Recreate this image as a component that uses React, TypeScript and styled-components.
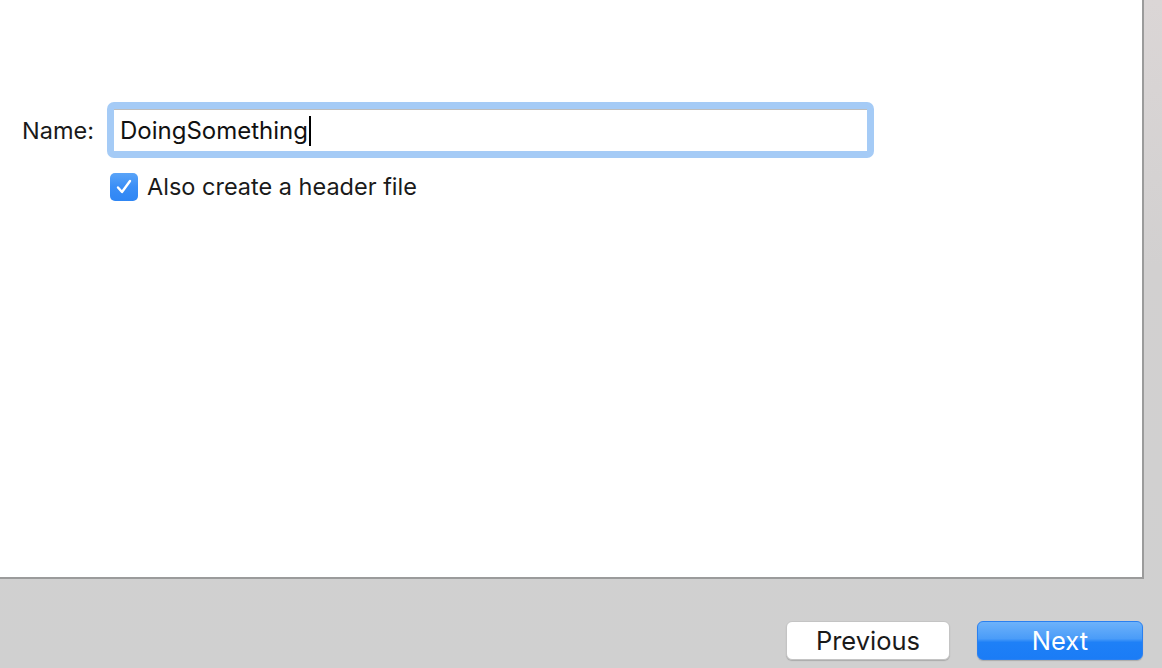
import React from "react";
import styled, { createGlobalStyle } from "styled-components";

const Global = createGlobalStyle`
  html, body { margin: 0; padding: 0; }
  body {
    width: 1162px; height: 668px; overflow: hidden;
    background: linear-gradient(180deg, #dbd6d6 0%, #d2d0d0 40%, #d0d0d0 100%);
    font-family: Inter, "Noto Sans", "Liberation Sans", sans-serif;
    color: #1c1c1c;
  }
`;

const Page = styled.div`
  display: flex;
  flex-direction: column;
  height: 668px;
`;

const Panel = styled.div`
  width: 1144px;
  height: 579px;
  box-sizing: border-box;
  background: #ffffff;
  border-right: 2px solid #9b9b9b;
  border-bottom: 2px solid #9b9b9b;
  padding-top: 102px;
`;

const Form = styled.div`
  display: grid;
  grid-template-columns: 107px 767px;
  row-gap: 14px;
  align-items: center;
`;

const Label = styled.label`
  font-size: 23.5px;
  text-align: right;
  padding-right: 13px;
  color: #1a1a1a;
`;

const Ring = styled.div`
  height: 56px;
  border-radius: 7px;
  background: #a5cbf6;
  padding: 7px;
  box-sizing: border-box;
  display: flex;
`;

const Field = styled.div`
  flex: 1;
  background: #fff;
  border-top: 1px solid #bdbdbd;
  display: flex;
  align-items: center;
  padding-left: 6px;
  font-size: 24px;
  color: #111;
`;

const Caret = styled.span`
  display: inline-block;
  width: 2px;
  height: 30px;
  background: #000;
  margin-left: 1px;
`;

const CheckRow = styled.div`
  grid-column: 2;
  display: flex;
  align-items: center;
  gap: 9px;
  padding-left: 3px;
  font-size: 23.5px;
  color: #1a1a1a;
`;

const Box = styled.span`
  width: 28px;
  height: 28px;
  border-radius: 5px;
  background: linear-gradient(180deg, #5aa4f8 0%, #3a8ef6 50%, #2f86f4 100%);
  display: flex;
  align-items: center;
  justify-content: center;
`;

const Footer = styled.div`
  flex: 1;
  display: flex;
  justify-content: flex-end;
  align-items: flex-start;
  gap: 27px;
  padding: 42px 19px 0 0;
`;

const Button = styled.button<{ $primary?: boolean }>`
  width: ${(p) => (p.$primary ? 166 : 164)}px;
  height: 39px;
  border-radius: 6px;
  font-family: inherit;
  font-size: 25.5px;
  line-height: 1;
  cursor: default;
  border: ${(p) => (p.$primary ? "1px solid #2a80f0" : "1px solid #c4c4c4")};
  color: ${(p) => (p.$primary ? "#ffffff" : "#1a1a1a")};
  background: ${(p) =>
    p.$primary
      ? "linear-gradient(180deg, #6db2fa 0%, #4a9cf8 45%, #1e80f7 55%, #1b7cf6 100%)"
      : "#ffffff"};
  box-shadow: 0 1px 1px rgba(0, 0, 0, 0.18);
  padding: 0;
`;

export default function App() {
  return (
    <>
      <Global />
      <Page>
        <Panel>
          <Form>
            <Label>Name:</Label>
            <Ring>
              <Field>
                DoingSomething
                <Caret />
              </Field>
            </Ring>
            <CheckRow>
              <Box>
                <svg width="20" height="20" viewBox="0 0 20 20">
                  <path d="M4 10.5 L8 15 L16 4" fill="none" stroke="#fff" strokeWidth="2.4" strokeLinecap="round" strokeLinejoin="round" />
                </svg>
              </Box>
              Also create a header file
            </CheckRow>
          </Form>
        </Panel>
        <Footer>
          <Button>Previous</Button>
          <Button $primary>Next</Button>
        </Footer>
      </Page>
    </>
  );
}
